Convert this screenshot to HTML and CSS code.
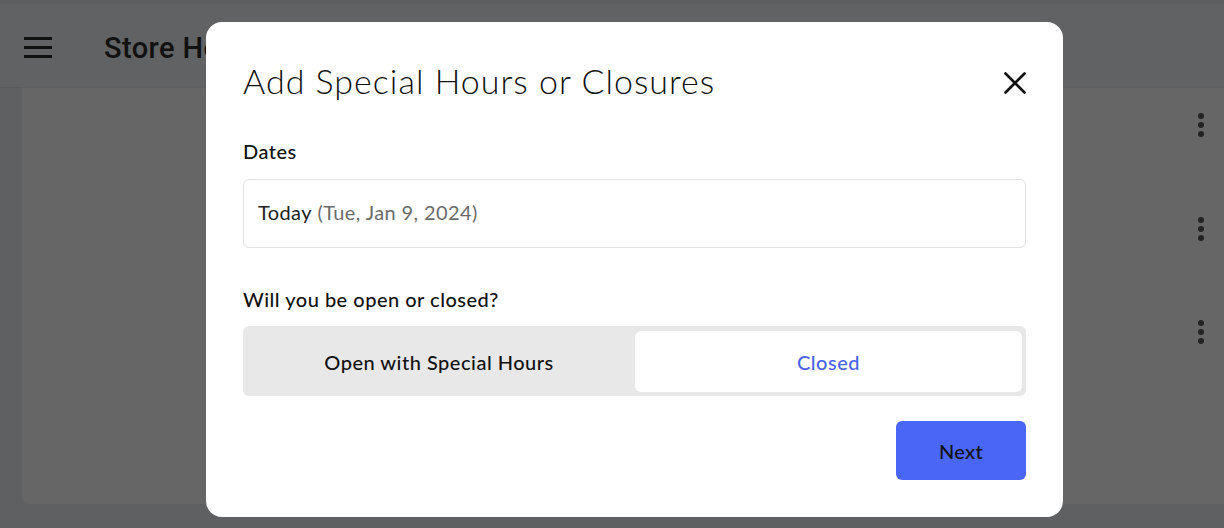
FILE: index.html
```html
<!DOCTYPE html>
<html lang="en">
<head>
<meta charset="utf-8">
<title>Store Hours</title>
<link rel="stylesheet" href="styles.css">
</head>
<body>
<div class="app">
  <div class="status"></div>
  <header class="topbar">
    <svg class="menu" width="28" height="22" viewBox="0 0 28 22"><rect x="0" y="0" width="28" height="3" fill="#111"/><rect x="0" y="9" width="28" height="3" fill="#111"/><rect x="0" y="18" width="28" height="3" fill="#111"/></svg>
    <h1 class="page-title">Store Hours</h1>
  </header>
  <main class="content">
    <section class="card">
      <div class="row"><span class="kebab"><i></i><i></i><i></i></span></div>
      <div class="row"><span class="kebab"><i></i><i></i><i></i></span></div>
      <div class="row"><span class="kebab"><i></i><i></i><i></i></span></div>
    </section>
  </main>
</div>

<div class="overlay">
  <div class="modal" role="dialog">
    <div class="modal-head">
      <h2 class="modal-title">Add Special Hours or Closures</h2>
      <button class="close" aria-label="Close">
        <svg width="22" height="22" viewBox="0 0 22 22"><path d="M1.5 1.5 L20.5 20.5 M20.5 1.5 L1.5 20.5" stroke="#111" stroke-width="2.6" stroke-linecap="round" fill="none"/></svg>
      </button>
    </div>
    <label class="field-label">Dates</label>
    <div class="input"><span class="today">Today</span>&nbsp;<span class="date">(Tue, Jan 9, 2024)</span></div>
    <label class="field-label second">Will you be open or closed?</label>
    <div class="segmented">
      <div class="seg">Open with Special Hours</div>
      <div class="seg active">Closed</div>
    </div>
    <div class="actions">
      <button class="next">Next</button>
    </div>
  </div>
</div>
</body>
</html>
```

FILE: styles.css
```css
* { box-sizing: border-box; }
html, body { margin: 0; padding: 0; }
body {
  width: 1224px;
  height: 528px;
  overflow: hidden;
  background: #5f6061;
  font-family: Lato, "Noto Sans", sans-serif;
}
.app { display: flex; flex-direction: column; height: 528px; }
.status { height: 4px; background: #5f6061; }
.topbar {
  height: 83px;
  background: #616263;
  display: flex;
  align-items: center;
  padding-left: 24px;
  box-shadow: 0 1px 1px rgba(0,0,0,0.06);
  position: relative;
  z-index: 1;
}
.menu { display: block; margin-top: 4px; }
.page-title {
  margin: 0 0 0 52px;
  font-family: Roboto, "Liberation Sans", sans-serif;
  font-weight: 500;
  font-size: 29px;
  letter-spacing: 0.4px;
  color: #111;
  padding-top: 5px;
}
.content { padding-left: 22px; flex: 0 0 417px; }
.card {
  height: 417px;
  background: #666666;
  border-radius: 0 0 0 6px;
  display: flex;
  flex-direction: column;
}
.row {
  height: 103.5px;
  display: flex;
  justify-content: flex-end;
  padding: 26px 20px 0 0;
}
.kebab { display: flex; flex-direction: column; gap: 3px; width: 6px; }
.kebab i { display: block; width: 6px; height: 6px; border-radius: 50%; background: #222; }

.overlay { position: fixed; inset: 0; z-index: 10; }
.modal {
  position: absolute;
  left: 206px;
  top: 22px;
  width: 857px;
  height: 495px;
  background: #fff;
  border-radius: 16px;
  padding: 38px 37px 0 37px;
  display: flex;
  flex-direction: column;
}
.modal-head { display: flex; align-items: center; justify-content: space-between; height: 40px; }
.modal-title {
  margin: 0;
  font-weight: 300;
  font-size: 34px;
  color: #111;
  letter-spacing: 1px;
}
.close {
  border: 0; background: none; padding: 0; margin: 6px 0 0 0;
  width: 22px; height: 22px; display: flex;
}
.field-label {
  display: block;
  font-size: 20px;
  font-weight: 500;
  color: #111;
  margin-top: 39px;
  line-height: 24px;
  letter-spacing: 0.5px;
}
.field-label.second { margin-top: 39px; }
.input {
  margin-top: 16px;
  height: 69px;
  border: 1.5px solid #e2e2e2;
  border-radius: 6px;
  display: flex;
  align-items: center;
  padding: 0 0 3px 14px;
  font-size: 20px;
  letter-spacing: 0.4px;
}
.today { color: #222; }
.date { color: #6b6b6b; }
.segmented {
  margin-top: 15px;
  height: 70px;
  background: #e8e8e8;
  border-radius: 6px;
  padding: 5px 4px 4px 0;
  display: flex;
}
.seg {
  flex: 1;
  display: flex;
  align-items: center;
  justify-content: center;
  font-size: 20px;
  font-weight: 500;
  letter-spacing: 0.5px;
  color: #111;
  border-radius: 6px;
}
.seg:first-child { flex: 0 0 392px; }
.seg.active { background: #fff; color: #4a63e8; }
.actions { display: flex; justify-content: flex-end; margin-top: 25px; }
.next {
  width: 130px;
  height: 59px;
  border: 0;
  border-radius: 6px;
  background: #4a66f7;
  color: #111;
  font-family: Lato, "Noto Sans", sans-serif;
  font-size: 20px;
  font-weight: 500;
  letter-spacing: 0.3px;
}
```
